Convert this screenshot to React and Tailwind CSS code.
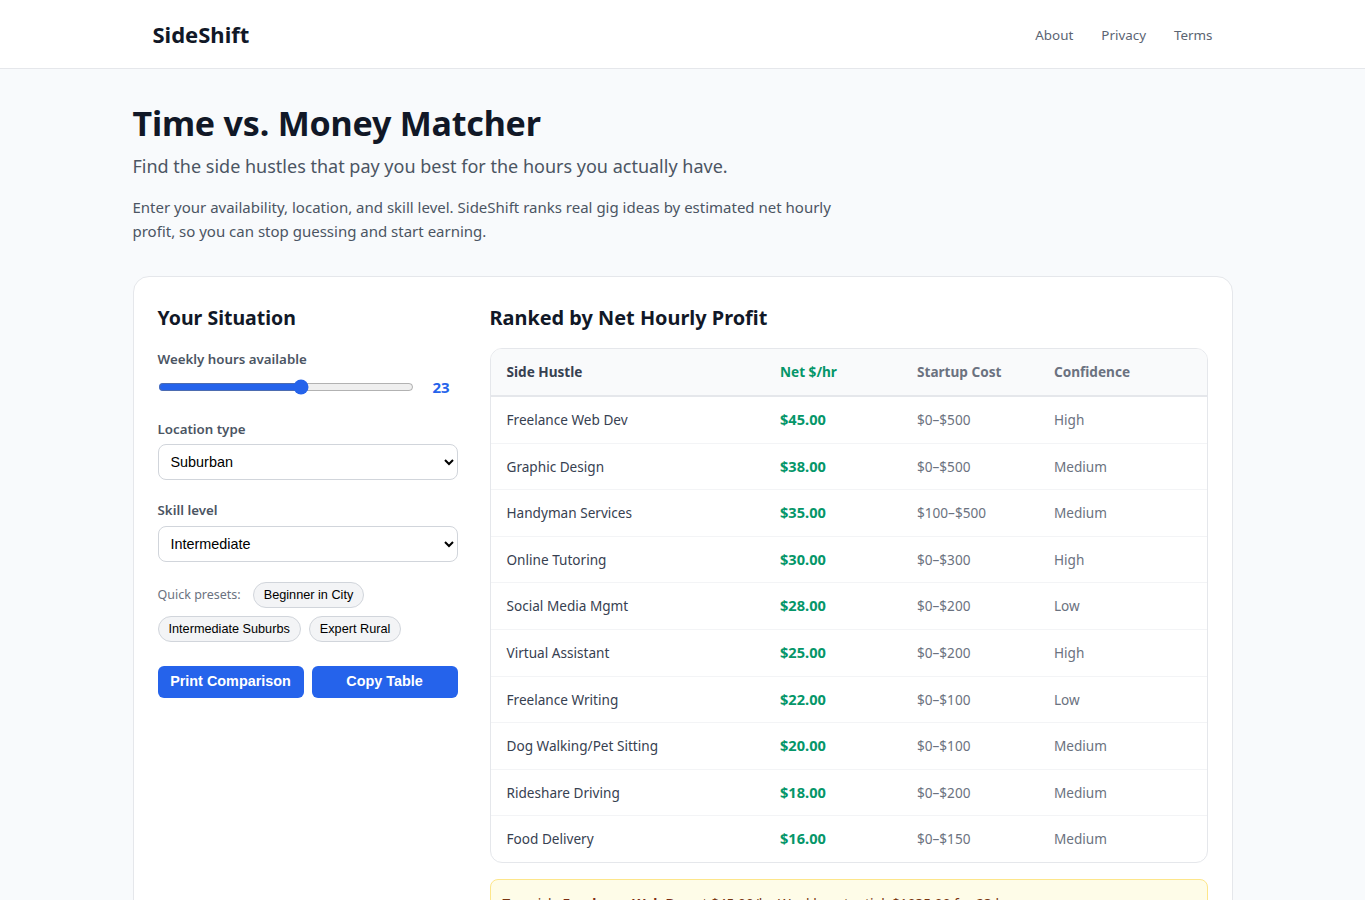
import { useState } from "react";

const hustles = [
  { name: "Freelance Web Dev", net: 45, cost: "$0–$500", confidence: "High" },
  { name: "Graphic Design", net: 38, cost: "$0–$500", confidence: "Medium" },
  { name: "Handyman Services", net: 35, cost: "$100–$500", confidence: "Medium" },
  { name: "Online Tutoring", net: 30, cost: "$0–$300", confidence: "High" },
  { name: "Social Media Mgmt", net: 28, cost: "$0–$200", confidence: "Low" },
  { name: "Virtual Assistant", net: 25, cost: "$0–$200", confidence: "High" },
  { name: "Freelance Writing", net: 22, cost: "$0–$100", confidence: "Low" },
  { name: "Dog Walking/Pet Sitting", net: 20, cost: "$0–$100", confidence: "Medium" },
  { name: "Rideshare Driving", net: 18, cost: "$0–$200", confidence: "Medium" },
  { name: "Food Delivery", net: 16, cost: "$0–$150", confidence: "Medium" },
];

const selectClass =
  "w-full h-9 px-2 bg-white border border-[#d1d5db] rounded-lg text-[14.4px] text-black font-['Liberation_Sans',Arial,sans-serif]";
const pillClass =
  "px-[10px] h-[26px] leading-[16px] bg-[#f3f4f6] border border-[#d1d5db] rounded-full text-[12.7px] text-black font-['Liberation_Sans',Arial,sans-serif]";
const buttonClass =
  "flex-1 h-8 bg-[#2563eb] text-white rounded-md text-[14.4px] font-bold font-['Liberation_Sans',Arial,sans-serif]";

export default function App() {
  const [hours, setHours] = useState(23);

  return (
    <div className="min-h-screen bg-[#f8fafc] font-['Noto_Sans',sans-serif] text-[#111827] leading-[1.5]">
      <header className="h-[69px] bg-white border-b border-[#e5e7eb]">
        <div className="max-w-[1100px] mx-auto h-full px-5 flex items-center justify-between">
          <span className="text-[22px] font-bold text-[#111827]">SideShift</span>
          <nav className="flex gap-7 pt-[2px] text-[13.4px] text-[#5b6472]">
            <a>About</a>
            <a>Privacy</a>
            <a>Terms</a>
          </nav>
        </div>
      </header>

      <main className="max-w-[1100px] mx-auto pt-[34px]">
        <h1 className="text-[34px] font-bold leading-[1.2] tracking-[-0.2px] text-[#111827]">Time vs. Money Matcher</h1>
        <p className="mt-[9px] text-[18px] text-[#4b5563]">
          Find the side hustles that pay you best for the hours you actually have.
        </p>
        <p className="mt-[15px] max-w-[720px] text-[15px] leading-[1.6] text-[#4b5563]">
          Enter your availability, location, and skill level. SideShift ranks real gig ideas by estimated net
          hourly profit, so you can stop guessing and start earning.
        </p>

        <section className="mt-[33px] bg-white border border-[#e5e7eb] rounded-2xl p-6 flex gap-8">
          {/* Inputs */}
          <div className="w-[300px] shrink-0">
            <h2 className="text-[19.5px] leading-[34px] font-bold">Your Situation</h2>
            <label className="block mt-[15px] text-[13.3px] font-semibold text-[#4b5563]">Weekly hours available</label>
            <div className="flex items-center gap-[19px] mt-[6px]">
              <input
                type="range"
                min="1"
                max="40"
                value={hours}
                onChange={(e) => setHours(Number(e.target.value))}
                className="w-[256px] accent-[#2563eb]"
              />
              <span className="text-[15px] font-bold text-[#2563eb]">{hours}</span>
            </div>

            <label className="block mt-[22px] mb-[4px] text-[13.3px] font-semibold text-[#4b5563]">Location type</label>
            <select className={selectClass} defaultValue="Suburban">
              <option>Urban</option>
              <option>Suburban</option>
              <option>Rural</option>
            </select>

            <label className="block mt-[21px] mb-[5px] text-[13.3px] font-semibold text-[#4b5563]">Skill level</label>
            <select className={selectClass} defaultValue="Intermediate">
              <option>Beginner</option>
              <option>Intermediate</option>
              <option>Expert</option>
            </select>

            <div className="flex flex-wrap items-center gap-x-2 gap-y-[8px] mt-5">
              <span className="mr-1 text-[12.5px] text-[#6b7280]">Quick presets:</span>
              <button className={pillClass}>Beginner in City</button>
              <button className={pillClass}>Intermediate Suburbs</button>
              <button className={pillClass}>Expert Rural</button>
            </div>

            <div className="flex gap-2 mt-[24px]">
              <button className={buttonClass}>Print Comparison</button>
              <button className={buttonClass}>Copy Table</button>
            </div>
          </div>

          {/* Results */}
          <div className="flex-1 min-w-0">
            <h2 className="text-[19.9px] leading-[34px] font-bold">Ranked by Net Hourly Profit</h2>
            <div className="mt-[13px] border border-[#e5e7eb] rounded-xl overflow-hidden">
              <table className="w-full table-fixed border-collapse text-[13.6px] leading-[21.6px]">
                <thead>
                  <tr className="bg-[#f9fafb] border-b-2 border-[#e5e7eb] text-left text-[#374151]">
                    <th className="w-[273.5px] px-4 py-[12.3px] font-bold">Side Hustle</th>
                    <th className="w-[137px] px-4 py-[12.3px] font-bold text-[#059669]">Net $/hr</th>
                    <th className="w-[137px] px-4 py-[12.3px] font-bold text-[#6b7280]">Startup Cost</th>
                    <th className="px-4 py-[12.3px] font-bold text-[#6b7280]">Confidence</th>
                  </tr>
                </thead>
                <tbody>
                  {hustles.map((h) => (
                    <tr key={h.name} className="border-b border-[#f3f4f6] last:border-b-0">
                      <td className="px-4 py-3 text-[#374151]">{h.name}</td>
                      <td className="px-4 py-3 text-[14.6px] font-bold text-[#059669]">${h.net.toFixed(2)}</td>
                      <td className="px-4 py-3 text-[#6b7280]">{h.cost}</td>
                      <td className="px-4 py-3 text-[#6b7280]">{h.confidence}</td>
                    </tr>
                  ))}
                </tbody>
              </table>
            </div>
            <div className="mt-4 px-3 pt-[14px] pb-3 bg-[#fefce8] border border-[#fde68a] rounded-lg text-[13.7px] text-[#78350f]">
              Top pick: <strong className="text-[#7c2d12]">Freelance Web Dev</strong> at $45.00/hr. Weekly potential: $1035.00 for {hours} hrs.
            </div>
          </div>
        </section>
      </main>
    </div>
  );
}
